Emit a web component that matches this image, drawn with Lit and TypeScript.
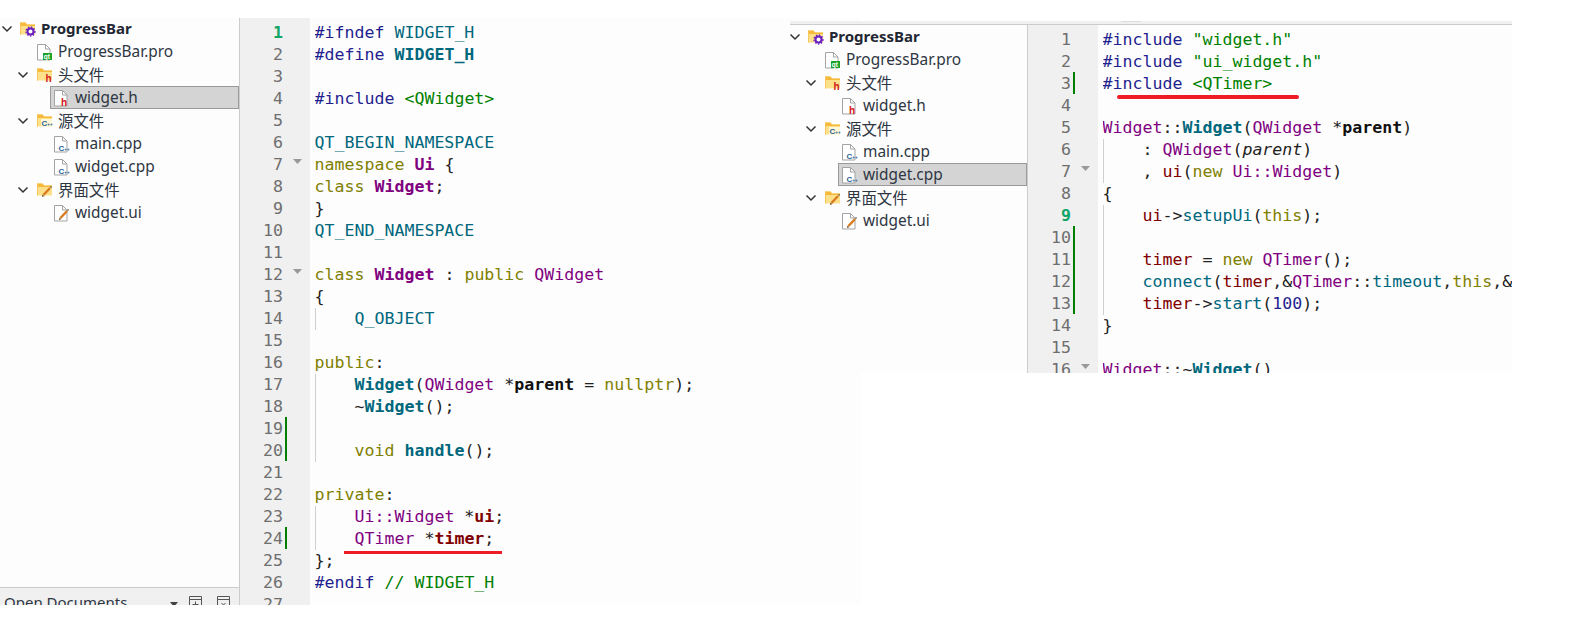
import { LitElement, html, css, svg, nothing } from "lit";
import { customElement, property } from "lit/decorators.js";

type Tok = [string, string];
interface Line { t?: Tok[]; fold?: boolean; mark?: boolean; guide?: boolean; cur?: boolean }
interface Node { label: string; depth: number; icon: string; open?: boolean; bold?: boolean; sel?: boolean }

const p = (s: string): Tok => ["", s];
const pp = (s: string): Tok => ["pp", s];
const kw = (s: string): Tok => ["kw", s];
const ty = (s: string): Tok => ["ty", s];
const tyb = (s: string): Tok => ["ty b", s];
const fn = (s: string): Tok => ["fn", s];
const fnb = (s: string): Tok => ["fn b", s];
const mc = (s: string): Tok => ["mc", s];
const st = (s: string): Tok => ["st", s];
const fd = (s: string): Tok => ["fd", s];
const fdb = (s: string): Tok => ["fd b", s];
const num = (s: string): Tok => ["pp", s];

const LEFT: Line[] = [
  { t: [pp("#ifndef"), p(" "), mc("WIDGET_H")], cur: true },
  { t: [pp("#define"), p(" "), ["mc b", "WIDGET_H"]] },
  {},
  { t: [pp("#include"), p(" "), st("<QWidget>")] },
  {},
  { t: [mc("QT_BEGIN_NAMESPACE")] },
  { t: [kw("namespace"), p(" "), tyb("Ui"), p(" {")], fold: true },
  { t: [kw("class"), p(" "), tyb("Widget"), p(";")] },
  { t: [p("}")] },
  { t: [mc("QT_END_NAMESPACE")] },
  {},
  { t: [kw("class"), p(" "), tyb("Widget"), p(" : "), kw("public"), p(" "), ty("QWidget")], fold: true },
  { t: [p("{")] },
  { t: [p("    "), mc("Q_OBJECT")], guide: true },
  {},
  { t: [kw("public"), p(":")] },
  { t: [p("    "), fnb("Widget"), p("("), ty("QWidget"), p(" *"), ["par b", "parent"], p(" = "), kw("nullptr"), p(");")], guide: true },
  { t: [p("    ~"), fnb("Widget"), p("();")], guide: true },
  { mark: true, guide: true },
  { t: [p("    "), kw("void"), p(" "), fnb("handle"), p("();")], mark: true, guide: true },
  {},
  { t: [kw("private"), p(":")] },
  { t: [p("    "), ty("Ui::Widget"), p(" *"), fdb("ui"), p(";")], guide: true },
  { t: [p("    "), ty("QTimer"), p(" *"), fdb("timer"), p(";")], mark: true, guide: true },
  { t: [p("};")] },
  { t: [pp("#endif"), p(" "), st("// WIDGET_H")] },
  {},
];

const RIGHT: Line[] = [
  { t: [pp("#include"), p(" "), st('"widget.h"')] },
  { t: [pp("#include"), p(" "), st('"ui_widget.h"')] },
  { t: [pp("#include"), p(" "), st("<QTimer>")], mark: true },
  {},
  { t: [ty("Widget"), p("::"), fnb("Widget"), p("("), ty("QWidget"), p(" *"), ["par b", "parent"], p(")")] },
  { t: [p("    : "), ty("QWidget"), p("("), ["it", "parent"], p(")")], guide: true },
  { t: [p("    , "), fd("ui"), p("("), kw("new"), p(" "), ty("Ui::Widget"), p(")")], guide: true, fold: true },
  { t: [p("{")] },
  { t: [p("    "), fd("ui"), p("->"), fn("setupUi"), p("("), kw("this"), p(");")], guide: true, cur: true },
  { mark: true, guide: true },
  { t: [p("    "), fd("timer"), p(" = "), kw("new"), p(" "), ty("QTimer"), p("();")], mark: true, guide: true },
  { t: [p("    "), fn("connect"), p("("), fd("timer"), p(",&"), ty("QTimer"), p("::"), fn("timeout"), p(","), kw("this"), p(",&"), ty("Widget"), p("::"), fn("handle"), p(");")], mark: true, guide: true },
  { t: [p("    "), fd("timer"), p("->"), fn("start"), p("("), num("100"), p(");")], mark: true, guide: true },
  { t: [p("}")] },
  {},
  { t: [ty("Widget"), p("::~"), fnb("Widget"), p("()")], fold: true },
];

const tree = (selected: string): Node[] => [
  { label: "ProgressBar", depth: 0, icon: "project", open: true, bold: true },
  { label: "ProgressBar.pro", depth: 1, icon: "qt" },
  { label: "头文件", depth: 1, icon: "dir-h", open: true },
  { label: "widget.h", depth: 2, icon: "file-h", sel: selected === "widget.h" },
  { label: "源文件", depth: 1, icon: "dir-c", open: true },
  { label: "main.cpp", depth: 2, icon: "file-c" },
  { label: "widget.cpp", depth: 2, icon: "file-c", sel: selected === "widget.cpp" },
  { label: "界面文件", depth: 1, icon: "dir-ui", open: true },
  { label: "widget.ui", depth: 2, icon: "file-ui" },
];

const tiny = (x: number, y: number, size: number, fill: string, text: string, weight = 400) =>
  svg`<text x=${x} y=${y} font-size=${size} font-weight=${weight} fill=${fill} font-family="Liberation Sans, sans-serif">${text}</text>`;

const cpp = (x: number, y: number) =>
  svg`<text x=${x} y=${y} font-size="8" fill="#2a5f92" font-weight="700" font-family="Liberation Sans, sans-serif">C<tspan font-size="4.500">++</tspan></text>`;

const folderShape = svg`
  <path d="M0 1.500h5.500l1.500 2h8v10H0z" fill="#fde18a"/>
  <path d="M0 1.500h5.500l1.500 2h8v1.600H0z" fill="#f6b93b"/>
  <path d="M0 1.500h1v12H0z" fill="#f6c65a"/>`;
const pageShape = svg`
  <path d="M.5.5h8l4.500 4.500v11H.5z" fill="#fff" stroke="#a3a3a3"/>
  <path d="M8.500.5v4.500h4.500" fill="none" stroke="#a3a3a3"/>`;
const pencil = svg`
  <path d="M13 6 6.500 13" stroke="#d97b1f" stroke-width="2.400" fill="none"/>
  <path d="M13.500 4.500l1 1" stroke="#555" stroke-width="1.400"/>
  <path d="M5 15l.5-2.500 1.800 1.800z" fill="#7a4a1a"/>`;

function icon(kind: string) {
  switch (kind) {
    case "project":
      return svg`${folderShape}<circle cx="10.500" cy="10.500" r="3" fill="#fff" stroke="#6a1fc0" stroke-width="2"/><circle cx="10.500" cy="10.500" r="4.500" fill="none" stroke="#6a1fc0" stroke-width="1.300" stroke-dasharray="1.500 1.500"/>`;
    case "dir-h":
      return svg`${folderShape}${tiny(8.500, 15, 10, "#d3171b", "h", 700)}`;
    case "dir-c":
      return svg`${folderShape}<rect x="4" y="6" width="11" height="8" fill="#fff6d6"/>${cpp(4.500, 13)}`;
    case "dir-ui":
      return svg`${folderShape}${pencil}`;
    case "qt":
      return svg`${pageShape}<rect x="6" y="9" width="9" height="7" fill="#1aa32a"/>${tiny(6.800, 14.700, 6.500, "#fff", "qt", 700)}`;
    case "file-h":
      return svg`${pageShape}${tiny(7, 15.500, 10, "#d3171b", "h", 700)}`;
    case "file-c":
      return svg`${pageShape}${cpp(4.500, 14.500)}`;
    default:
      return svg`${pageShape}${pencil}`;
  }
}

@customElement("file-tree")
class FileTree extends LitElement {
  @property({ attribute: false }) nodes: Node[] = [];
  static styles = css`
    :host { display: block; height: 100%; overflow: hidden; }
    .row {
      display: flex; align-items: center; height: 23px; box-sizing: border-box;
      font: 15.4px "Noto Sans", "Noto Sans CJK SC", sans-serif; color: #2e3642; white-space: nowrap;
    }
    .d0 { margin-left: 0; }
    .d1 { margin-left: 16px; }
    .d2 { margin-left: 50px; padding-left: 4px; }
    .sel { background: #d4d4d4; border: 1px solid #9a9a9a; padding-left: 3px; }
    .chev { width: 14px; height: 8px; flex: none; margin-right: 6px; }
    .d1 .chev { margin-right: 7px; }
    .d2 .chev { display: none; }
    .ic { width: 15px; height: 16px; flex: none; margin-right: 6px; overflow: visible; }
    .b { font-size: 15px; font-weight: 700; color: #1f2733; margin-bottom: 1px; }
  `;
  render() {
    return this.nodes.map(
      (n) => html`<div class="row d${n.depth} ${n.sel ? "sel" : ""}">
        <svg class="chev" viewBox="0 0 14 8">
          ${n.open ? svg`<path d="M2.500 1.500 7 6l4.500-4.500" fill="none" stroke="#333" stroke-width="1.500"/>` : nothing}
        </svg>
        <svg class="ic" viewBox="0 0 15 16">${icon(n.icon)}</svg>
        <span class=${n.bold ? "b" : ""}>${n.label}</span>
      </div>`
    );
  }
}

@customElement("code-editor")
class CodeEditor extends LitElement {
  @property({ attribute: false }) lines: Line[] = [];
  static styles = css`
    :host {
      display: block; height: 100%; overflow: hidden; box-sizing: border-box; padding-top: 4px;
      font: 16.6px/22px "DejaVu Sans Mono", monospace; color: #222;
      background: linear-gradient(90deg, #f0f0f0 70px, #fdfdfd 70px);
    }
    .ln { display: flex; height: 22px; white-space: pre; }
    .no { width: 43px; flex: none; text-align: right; color: #6e6e6e; }
    .cur { color: #12a566; font-weight: 700; }
    .bar { width: 2px; margin: -1px 0 1px 2px; flex: none; }
    .bar.on { background: #008000; }
    .fold { width: 9px; margin-left: 6px; margin-right: 8px; flex: none; }
    .fold svg { display: block; margin-top: 5px; }
    .code { margin-left: 4.500px; flex: 1; min-width: 0; overflow: hidden; }
    .guide .code { box-shadow: inset 1px 0 #cfcfcf; }
    .pp { color: #1f1f8f; }
    .kw { color: #808000; }
    .ty { color: #800080; }
    .fn { color: #00677c; }
    .mc { color: #00677c; }
    .st { color: #008000; }
    .fd { color: #800000; }
    .par { color: #111; }
    .it { color: #222; font-style: italic; }
    .b { font-weight: 700; }
  `;
  render() {
    return this.lines.map(
      (l, i) => html`<div class="ln ${l.guide ? "guide" : ""}">
        <span class="no ${l.cur ? "cur" : ""}">${i + 1}</span>
        <span class="bar ${l.mark ? "on" : ""}"></span>
        <span class="fold">${l.fold
          ? html`<svg width="9" height="5" viewBox="0 0 9 5"><path d="M0 0h9L4.500 5z" fill="#999"/></svg>`
          : nothing}</span>
        <span class="code">${(l.t ?? []).map(([c, s]) => html`<span class=${c}>${s}</span>`)}</span>
      </div>`
    );
  }
}

@customElement("app-root")
class AppRoot extends LitElement {
  static styles = css`
    :host { display: block; position: relative; height: 619px; background: #fff; overflow: hidden; }
    .win { position: absolute; display: flex; flex-direction: column; background: #fdfdfd; overflow: hidden; }
    .left { left: 0; top: 18px; width: 861px; height: 587px; }
    .right { left: 790px; top: 21px; width: 722px; height: 352px; }
    .strip { height: 3px; flex: none; background: #f0f0f0; border-bottom: 1px solid #ccc; display: flex; justify-content: center; }
    .grip { width: 20px; height: 1px; background: #dcdcdc; margin-right: 40px; }
    .body { flex: 1; min-height: 0; display: flex; }
    .side { display: flex; flex-direction: column; flex: none; border-right: 1px solid #ccc; min-height: 0; }
    .left .side { width: 239px; }
    .right .side { width: 237px; }
    .tree { flex: 1; min-height: 0; overflow: hidden; }
    .left .tree file-tree { margin-top: -0.6px; }
    .right .tree file-tree { margin-left: -2px; }
    .foot {
      height: 17px; flex: none; box-sizing: content-box; background: #f0f0f0; border-top: 1px solid #ccc;
      display: flex; align-items: flex-start; overflow: hidden; padding-left: 4px;
      font: 15px/22px "Noto Sans", sans-serif; color: #2e3642;
    }
    .foot .lbl { width: 166px; flex: none; margin-top: 3px; }
    .foot .arrow { width: 0; height: 0; border: 4px solid transparent; border-top: 5px solid #444; border-bottom: 0; margin-top: 14px; }
    .foot .sep { width: 1px; height: 17px; background: #ccc; margin-left: 4px; margin-right: 7px; }
    .foot svg { flex: none; margin-top: 8px; margin-right: 15px; }
    .pane { flex: 1; min-width: 0; }
    .mark { position: absolute; background: #ee1c25; }
    .m1 { left: 344px; top: 533px; width: 158px; height: 3px; }
    .m2 { left: 327px; top: 74px; width: 182px; height: 4px; border-radius: 2px; }
  `;
  render() {
    return html`
      <section class="win left">
        <div class="body">
          <div class="side">
            <div class="tree"><file-tree .nodes=${tree("widget.h")}></file-tree></div>
            <div class="foot">
              <span class="lbl">Open Documents</span>
              <span class="arrow"></span>
              <span class="sep"></span>
              <svg width="13" height="14" viewBox="0 0 13 14" fill="none" stroke="#555"><path d="M.5 14V.5h12V14M.5 3.500h12M6.500 5.500v6M3.500 8.500h6"/></svg>
              <svg width="13" height="14" viewBox="0 0 13 14" fill="none" stroke="#555"><path d="M.5 14V.5h12V14M.5 3.500h12M4.500 7l4 4M8.500 7l-4 4"/></svg>
            </div>
          </div>
          <div class="pane"><code-editor .lines=${LEFT}></code-editor></div>
        </div>
        <div class="mark m1"></div>
      </section>
      <section class="win right">
        <div class="strip"><span class="grip"></span></div>
        <div class="body">
          <div class="side"><div class="tree"><file-tree .nodes=${tree("widget.cpp")}></file-tree></div></div>
          <div class="pane"><code-editor .lines=${RIGHT}></code-editor></div>
        </div>
        <div class="mark m2"></div>
      </section>
    `;
  }
}
